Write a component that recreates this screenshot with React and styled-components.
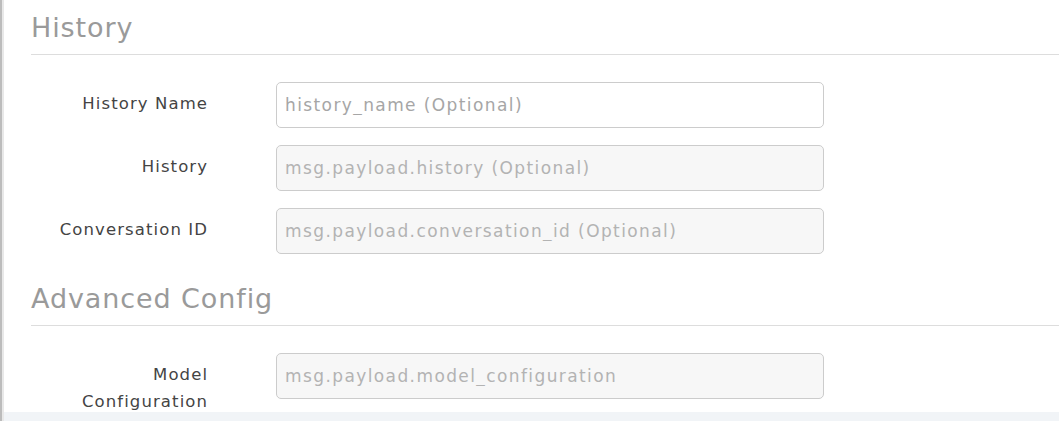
import styled, { createGlobalStyle } from "styled-components";

const GlobalStyle = createGlobalStyle`
  html, body {
    margin: 0;
    padding: 0;
    background: #ffffff;
  }
  body {
    font-family: "DejaVu Sans", "Open Sans", sans-serif;
  }
`;

const Frame = styled.div`
  width: 1059px;
  height: 421px;
  overflow: hidden;
  display: flex;
  flex-direction: column;
  border-left: 2px solid #bcbcbc;
  box-sizing: border-box;
`;

const Panel = styled.div`
  flex: 1;
  border-left: 2px solid #e8e8e8;
  padding: 9px 0 0 27px;
  overflow: hidden;
`;

const Footer = styled.div`
  height: 9px;
  flex-shrink: 0;
  background: #f1f4f7;
  border-left: 2px solid #e8e8e8;
`;

const SectionTitle = styled.h2`
  margin: 0;
  font-size: 27px;
  font-weight: 400;
  line-height: 38px;
  letter-spacing: 0.9px;
  color: #9a9a9a;
  padding-bottom: 7px;
  border-bottom: 1px solid #dddddd;
`;

const Rows = styled.div`
  display: flex;
  flex-direction: column;
  gap: 17px;
  padding: 27px 0 26px 0;
`;

const Row = styled.div`
  display: grid;
  grid-template-columns: 176px 548px;
  column-gap: 69px;
  align-items: start;
`;

const Label = styled.label`
  text-align: right;
  padding-top: 8px;
  font-size: 16.5px;
  line-height: 27px;
  letter-spacing: 1.1px;
  color: #444444;
  margin-right: -1.1px;
`;

const Field = styled.input`
  box-sizing: border-box;
  width: 100%;
  height: 46px;
  padding: 0 8px;
  border: 1px solid #cccccc;
  border-radius: 5px;
  background: ${(p) => (p.disabled ? "#f7f7f7" : "#ffffff")};
  font-family: inherit;
  font-size: 17px;
  letter-spacing: 1.4px;
  color: #555555;
  outline: none;

  &::placeholder {
    color: ${(p) => (p.disabled ? "#b3b3b3" : "#a6a6a6")};
    opacity: 1;
  }
`;

const historyFields = [
  { label: "History Name", placeholder: "history_name (Optional)", disabled: false },
  { label: "History", placeholder: "msg.payload.history (Optional)", disabled: true },
  { label: "Conversation ID", placeholder: "msg.payload.conversation_id (Optional)", disabled: true },
];

const advancedFields = [
  { label: ["Model", "Configuration"], placeholder: "msg.payload.model_configuration", disabled: true },
];

const FormRow = ({ label, placeholder, disabled }) => (
  <Row>
    <Label>
      {Array.isArray(label)
        ? label.map((l, i) => (
            <span key={i}>
              {l}
              {i < label.length - 1 && <br />}
            </span>
          ))
        : label}
    </Label>
    <Field placeholder={placeholder} disabled={disabled} />
  </Row>
);

export default function App() {
  return (
    <>
      <GlobalStyle />
      <Frame>
        <Panel>
          <SectionTitle>History</SectionTitle>
          <Rows>
            {historyFields.map((f) => (
              <FormRow key={f.placeholder} {...f} />
            ))}
          </Rows>
          <SectionTitle>Advanced Config</SectionTitle>
          <Rows>
            {advancedFields.map((f) => (
              <FormRow key={f.placeholder} {...f} />
            ))}
          </Rows>
        </Panel>
        <Footer />
      </Frame>
    </>
  );
}
